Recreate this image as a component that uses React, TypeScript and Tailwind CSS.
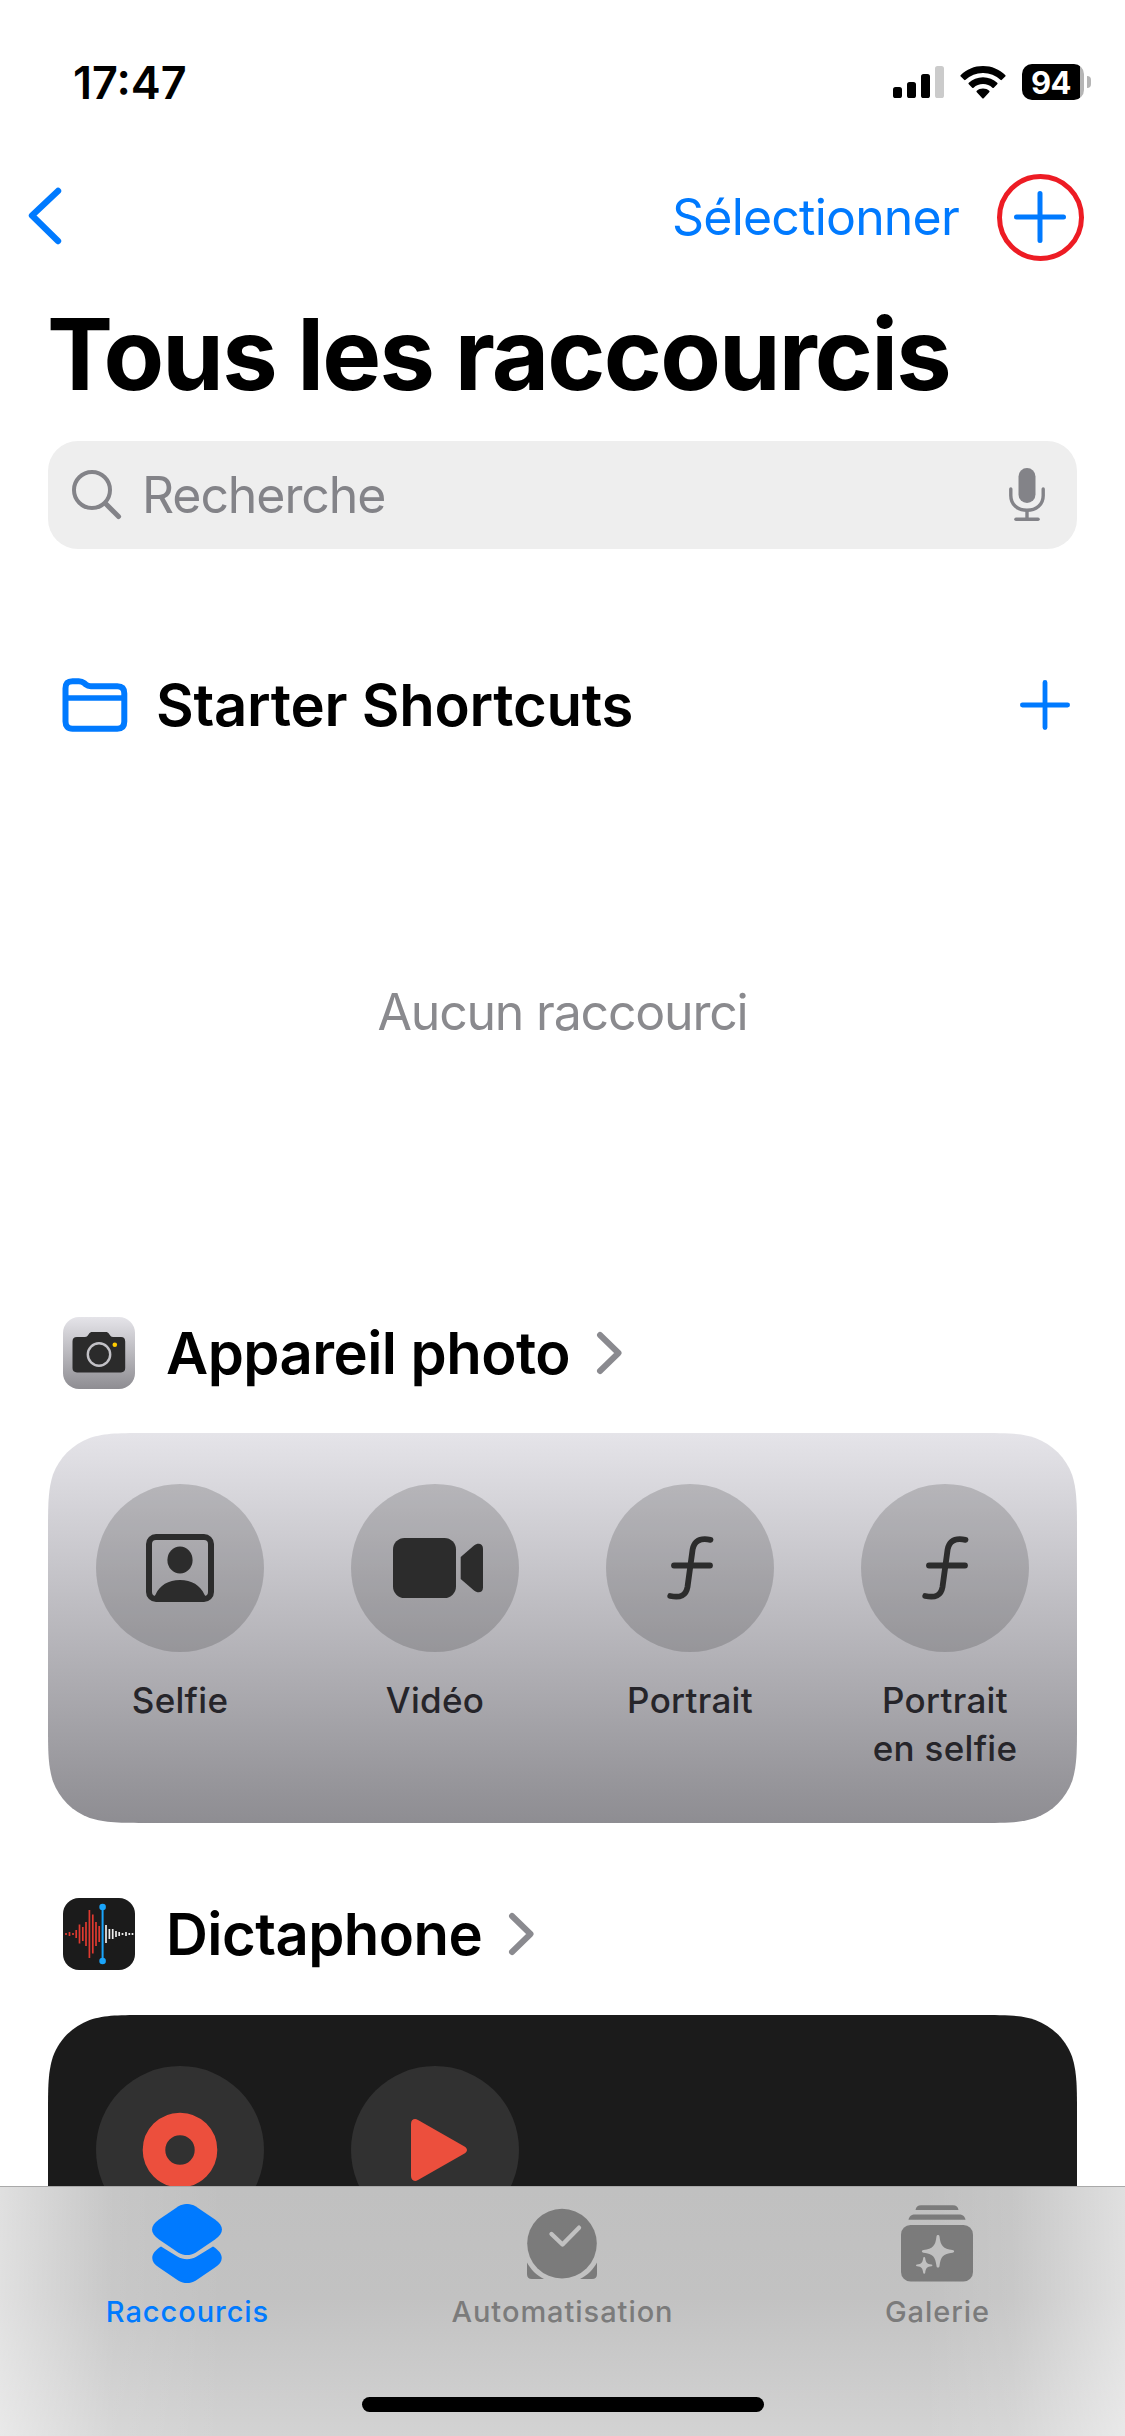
import React from 'react';

interface Shortcut {
  label: string;
  icon: React.ReactNode;
}

interface SectionTitleProps {
  icon: React.ReactNode;
  title: string;
}

interface TabProps {
  icon: React.ReactNode;
  label: string;
  active?: boolean;
}

const SignalIcon = () => (
  <svg className="h-8 w-[51px]" viewBox="0 0 51 32">
    <rect x="0" y="21" width="9" height="11" rx="2.6" />
    <rect x="14" y="16" width="9" height="16" rx="2.6" />
    <rect x="28" y="8" width="9" height="24" rx="2.6" />
    <rect x="42" y="0" width="9" height="32" rx="2.6" fill="#cbcbcb" />
  </svg>
);

const WifiIcon = () => (
  <svg className="h-[33px] w-[46px]" viewBox="0 0 46 33">
    <path d="M23 0C31.700 0 39.500 3.400 45.200 9a1 1 0 0 1 0 1.500l-3.300 3.300a1 1 0 0 1-1.500 0A25 25 0 0 0 23 6.900 25 25 0 0 0 5.600 13.800a1 1 0 0 1-1.500 0L.8 10.500a1 1 0 0 1 0-1.500C6.500 3.400 14.300 0 23 0Z" />
    <path d="M23 11.200c5.500 0 10.500 2.100 14.200 5.600a1 1 0 0 1 0 1.500l-3.400 3.400a1 1 0 0 1-1.400 0A13.800 13.800 0 0 0 23 18.100c-3.600 0-6.900 1.400-9.400 3.600a1 1 0 0 1-1.400 0l-3.400-3.400a1 1 0 0 1 0-1.500c3.700-3.500 8.700-5.600 14.200-5.600Z" />
    <path d="M23 22.500c2.400 0 4.600.9 6.200 2.300a1 1 0 0 1 0 1.500l-5.500 5.900a1 1 0 0 1-1.400 0l-5.500-5.900a1 1 0 0 1 0-1.500c1.600-1.400 3.800-2.300 6.200-2.300Z" />
  </svg>
);

const FolderIcon = () => (
  <svg className="h-[54px] w-[66px]" viewBox="0 0 66 54" fill="none" stroke="#007aff" strokeWidth="6" strokeLinejoin="round">
    <path d="M3.500 10.500c0-5 2.200-7.300 7-7.300h6.300c2.300 0 3.700.5 5.300 1.900l1.700 1.500c1.500 1.300 2.800 1.700 5 1.700h26.500c4.600 0 7 2.500 7 7.200v28c0 4.700-2.400 7.200-7 7.200h-44.800c-4.600 0-7-2.500-7-7.200Z" />
    <path d="M4 20h58" strokeWidth="5.400" />
  </svg>
);

const PlusIcon = ({ className }: { className: string }) => (
  <svg className={className} viewBox="0 0 52 52" fill="none" stroke="#007aff" strokeWidth="5" strokeLinecap="round">
    <path d="M26 2.500v47M2.500 26h47" />
  </svg>
);

const SearchIcon = () => (
  <svg className="h-[50px] w-[50px]" viewBox="0 0 50 50" fill="none" stroke="#838388" strokeLinecap="round">
    <circle cx="20" cy="20" r="18" strokeWidth="4" />
    <path d="M33.500 33.500l13 13" strokeWidth="5" />
  </svg>
);

const MicIcon = () => (
  <svg className="h-[54px] w-[36px]" viewBox="0 0 36 54" fill="none" stroke="#838388" strokeLinecap="round">
    <rect x="9.500" y="0" width="17" height="35" rx="8.500" fill="#838388" stroke="none" />
    <path d="M1.800 21v6.500C1.800 36.500 8.500 42.300 18 42.300s16.200-5.800 16.200-14.800V21" strokeWidth="3.400" />
    <path d="M18 43v7" strokeWidth="3.400" />
    <path d="M7 51.200h22" strokeWidth="3.600" />
  </svg>
);

const ChevronRight = () => (
  <svg className="h-[44px] w-[27px]" viewBox="0 0 27 44" fill="none" stroke="#8a8a8f" strokeWidth="6" strokeLinecap="round" strokeLinejoin="round">
    <path d="M4 4l18.500 18L4 40" />
  </svg>
);

const CameraAppIcon = () => (
  <svg className="h-[72px] w-[72px]" viewBox="0 0 72 72">
    <defs>
      <linearGradient id="cam" x1="0" y1="0" x2="0" y2="1">
        <stop offset="0" stopColor="#e5e4e9" />
        <stop offset="1" stopColor="#8e8d92" />
      </linearGradient>
    </defs>
    <rect width="72" height="72" rx="16" fill="url(#cam)" />
    <path d="M14 20h8c1.600 0 2.400-.6 3.200-1.900l.8-1.300c.9-1.400 1.700-1.900 3.400-1.900h13.200c1.700 0 2.500.5 3.400 1.900l.8 1.300c.8 1.300 1.600 1.900 3.200 1.900h8c2.700 0 4.200 1.500 4.200 4.400v26.700c0 2.900-1.500 4.300-4.200 4.300H14c-2.900 0-4.500-1.400-4.500-4.300V24.400c0-2.900 1.600-4.400 4.500-4.400Z" fill="#2b2b2b" />
    <circle cx="36" cy="37.500" r="11.200" fill="none" stroke="#c2c1c6" strokeWidth="2.400" />
    <circle cx="51.800" cy="27.700" r="2.300" fill="#ffcc00" />
  </svg>
);

// x position and half height of every bar in the wave
const redBars = [
  [3, 1], [6.500, 2], [10, 1], [13.200, 4], [16.500, 9.500], [19.800, 7], [23, 12],
  [26.400, 24], [29.800, 19.500], [33, 12], [36.200, 8],
];
const whiteBars = [
  [43, 9], [46.400, 5], [49.700, 5], [53, 3], [56.200, 2], [59.500, 1], [63, 2], [66.300, 1], [69.500, 1],
];

const DictaphoneAppIcon = () => (
  <svg className="h-[72px] w-[72px]" viewBox="0 0 72 72">
    <rect width="72" height="72" rx="16" fill="#1b1b1b" />
    {redBars.map(([x, h]) => (
      <path key={x} d={`M${x} ${36 - h}v${h * 2}`} stroke="#e03a30" strokeWidth="1.700" />
    ))}
    {whiteBars.map(([x, h]) => (
      <path key={x} d={`M${x} ${36 - h}v${h * 2}`} stroke="#ececec" strokeWidth="1.700" />
    ))}
    <path d="M39.600 9v54" stroke="#1aa5fb" strokeWidth="2" />
    <circle cx="39.600" cy="9" r="3.300" fill="#1aa5fb" />
    <circle cx="39.600" cy="63" r="3.300" fill="#1aa5fb" />
  </svg>
);

const SelfieIcon = () => (
  <svg className="h-[68px] w-[68px]" viewBox="0 0 68 68" fill="#2c2c2c">
    <rect x="3" y="3" width="62" height="62" rx="7" fill="none" stroke="#2c2c2c" strokeWidth="6" />
    <ellipse cx="34" cy="26" rx="12.600" ry="13.600" />
    <path d="M5 65c2-1.200 3.500-2.200 4.600-4.600C13.500 51.500 22.500 46 34 46s20.500 5.500 24.400 14.400C59.500 62.800 61 63.800 63 65Z" />
  </svg>
);

const VideoIcon = () => (
  <svg className="ml-1.5 h-[60px] w-[90px]" viewBox="0 0 90 60" fill="#2c2c2c">
    <rect x="0" y="0" width="63" height="60" rx="11.500" />
    <path d="M67.700 19 81 7.500c3.500-3 9-2.500 9 3v39c0 5.500-5.500 6-9 3L67.700 41Z" />
  </svg>
);

const FunctionIcon = () => (
  <svg className="h-[64px] w-[47px]" viewBox="0 0 47 64" fill="none" stroke="#2c2c2c" strokeWidth="5.800" strokeLinecap="round">
    <path d="M43.500 3.800C33 1.800 27.300 4.700 25.600 13.500L20.500 51C19 59.500 13.500 62.200 3.200 60" />
    <path d="M7 29.500h36" />
  </svg>
);

const RecordIcon = () => (
  <svg className="h-[76px] w-[76px]" viewBox="0 0 76 76">
    <circle cx="38" cy="38" r="26" fill="none" stroke="#ec4f3d" strokeWidth="22.600" />
  </svg>
);

const PlayIcon = () => (
  <svg className="ml-2 h-[62px] w-[56px]" viewBox="0 0 56 62" fill="#ec4f3d">
    <path d="M0 5C0 .8 3.300-1.200 7 1l46.500 26.500c3.300 2 3.300 5 0 7L7 61C3.300 63.200 0 61.200 0 57Z" />
  </svg>
);

const ShortcutsIcon = () => (
  <svg className="mr-0.5 h-20 w-[70px]" viewBox="0 0 70 80" fill="#007aff">
    <path d="M26.500 2.300c5.500-3.100 11.500-3.100 17 0L63 15.500c9.300 6.300 9.300 13.700 0 20L43.500 48.700c-5.500 3.100-11.500 3.100-17 0L7 35.500c-9.300-6.300-9.300-13.700 0-20Z" />
    <path d="M9 42.500 25.300 52.600c6.300 3.600 13.100 3.600 19.400 0L61 42.500c10.500 6.500 12 14.500 2 21L43.500 76.700c-5.500 3.100-11.500 3.100-17 0L7 63.500c-10-6.500-8.500-14.500 2-21Z" />
  </svg>
);

const AutomationIcon = () => (
  <svg className="mr-0.5 h-20 w-[70px]" viewBox="0 0 70 80" fill="#7b7b7b">
    <circle cx="35" cy="39.600" r="34.800" />
    <path d="M0 58.500C3.500 65 9.500 71.500 17 75H5c-3.400 0-5-1.600-5-5Z" />
    <path d="M70 58.500C66.500 65 60.500 71.500 53 75h12c3.400 0 5-1.600 5-5Z" />
    <path d="M24.500 30 35.500 40.500 52 23.700" fill="none" stroke="#c1c1c1" strokeWidth="4.400" strokeLinecap="round" strokeLinejoin="round" />
  </svg>
);

const GalleryIcon = () => (
  <svg className="mr-0.5 h-20 w-[72px]" viewBox="0 0 72 80" fill="#7b7b7b">
    <path d="M14.500 6c.4-3.300 2.300-4.800 5.500-4.800h32c3.200 0 5.100 1.500 5.500 4.800Z" />
    <path d="M7.500 15.800c.7-3.700 3-5.300 6.500-5.300h44c3.500 0 5.800 1.600 6.500 5.300Z" />
    <rect x="0" y="21" width="72" height="56.500" rx="9.500" />
    <path d="M37 31c.9 0 1.400.5 1.500 1.500 1.100 9.400 3.600 12.400 13 13.400 1 .1 1.600.6 1.600 1.400s-.6 1.300-1.600 1.400c-9.400 1-11.900 4-13 13.400-.1 1-.6 1.500-1.500 1.500s-1.400-.5-1.500-1.500c-1.100-9.400-3.600-12.400-13-13.400-1-.1-1.600-.6-1.600-1.400s.6-1.300 1.600-1.400c9.400-1 11.900-4 13-13.400.1-1 .6-1.500 1.500-1.500Z" fill="#c0c0c0" />
    <path d="M23.200 53c.6 0 .9.300 1 1 .5 4.500 1.800 6 6.200 6.500.6.100 1 .4 1 .9s-.4.800-1 .9c-4.400.5-5.700 2-6.200 6.500-.1.700-.4 1-1 1s-.9-.3-1-1c-.5-4.500-1.800-6-6.200-6.500-.6-.1-1-.4-1-.9s.4-.8 1-.9c4.400-.5 5.700-2 6.200-6.500.1-.7.4-1 1-1Z" fill="#c0c0c0" />
  </svg>
);

const SectionTitle: React.FC<SectionTitleProps> = ({ icon, title }) => (
  <div className="flex h-[72px] items-center pl-[63px]">
    {icon}
    <h2 className="ml-[31px] mr-[26px] text-[58px] font-semibold leading-[72px] tracking-[-0.55px]">{title}</h2>
    <ChevronRight />
  </div>
);

const Tab: React.FC<TabProps> = ({ icon, label, active }) => (
  <div className="flex flex-col items-center pt-[17px]">
    {icon}
    <span
      className={`mt-[11px] text-[29px] font-medium leading-[34px] tracking-[0.95px] ${
        active ? 'text-[#007aff]' : 'text-[#7b7b7b]'
      }`}
    >
      {label}
    </span>
  </div>
);

const cameraShortcuts: Shortcut[] = [
  { label: 'Selfie', icon: <SelfieIcon /> },
  { label: 'Vidéo', icon: <VideoIcon /> },
  { label: 'Portrait', icon: <FunctionIcon /> },
  { label: 'Portrait\nen selfie', icon: <FunctionIcon /> },
];

const App: React.FC = () => {
  return (
    <div className="flex h-[2436px] w-[1125px] flex-col overflow-hidden bg-white font-['Inter','Liberation_Sans',sans-serif] text-black">
      <main className="min-h-0 flex-1 overflow-hidden">
        {/* Status bar */}
        <div className="flex h-[132px] items-center pl-[73px] pr-[34px] pt-8">
          <span className="text-[45px] font-semibold leading-none">17:47</span>
          <div className="ml-auto flex items-center">
            <SignalIcon />
            <span className="ml-4 flex">
              <WifiIcon />
            </span>
            <div className="ml-4 flex h-9 w-[62px] items-center justify-center rounded-[10px] bg-linear-to-r from-black from-94% to-[#b5b5b5] to-94% pr-1 text-[31px] font-bold leading-none tracking-[-0.5px] text-white">
              94
            </div>
            <div className="ml-[3px] h-3 w-1 rounded-r-full bg-[#b5b5b5]" />
          </div>
        </div>

        {/* Navigation */}
        <div className="flex h-[171px] items-center pl-[27px] pr-[41px]">
          <svg className="mb-1 h-[58px] w-[35px]" viewBox="0 0 35 58" fill="none" stroke="#007aff" strokeWidth="6.400" strokeLinecap="round" strokeLinejoin="round">
            <path d="M31 4 5 28.500 31 54" />
          </svg>
          <span className="mb-0.5 ml-auto mr-[38px] text-[50px] leading-none tracking-[-0.8px] text-[#007aff]">Sélectionner</span>
          <div className="flex h-[87px] w-[87px] items-center justify-center rounded-full border-[5px] border-[#ed1c24]">
            <PlusIcon className="mb-0.5 mr-0.5 h-[52px] w-[52px]" />
          </div>
        </div>

        <h1 className="pl-[47px] text-[99px] font-bold leading-[102px] tracking-[-1.85px]">Tous les raccourcis</h1>

        {/* Search */}
        <div className="mx-12 mt-9 flex h-[108px] items-center rounded-[30px] bg-[#eeeeee] pl-6 pr-8">
          <SearchIcon />
          <span className="ml-[20px] flex-1 text-[50px] leading-none tracking-[-1.1px] text-[#838388]">Recherche</span>
          <MicIcon />
        </div>

        <div className="mt-[114px] flex h-[84px] items-center pl-[62px] pr-[55px]">
          <FolderIcon />
          <h2 className="ml-[28px] flex-1 text-[58px] font-semibold leading-[84px] tracking-[-0.25px]">Starter Shortcuts</h2>
          <PlusIcon className="h-[50px] w-[50px]" />
        </div>

        <div className="flex h-[530px] items-center justify-center text-[50px] leading-none tracking-[-1.2px] text-[#8a8a8e]">
          Aucun raccourci
        </div>

        <section className="mt-10">
          <SectionTitle icon={<CameraAppIcon />} title="Appareil photo" />
          <div className="mx-12 mt-11 grid h-[390px] grid-cols-4 gap-[87px] bg-linear-to-b from-[#e5e4e9] to-[#8e8d92] px-12 pt-[51px] [clip-path:path('M100.9,0_H928.1_C957.2,0_971.7,0_987.3,4.9_C1004.4,11.2_1017.8,24.6_1024.1,41.7_C1029,57.3_1029,71.8_1029,100.9_V289.1_C1029,318.2_1029,332.7_1024.1,348.3_C1017.8,365.4_1004.4,378.8_987.3,385.1_C971.7,390_957.2,390_928.1,390_H100.9_C71.8,390_57.3,390_41.7,385.1_C24.6,378.8_11.2,365.4_4.9,348.3_C0,332.7_0,318.2_0,289.1_V100.9_C0,71.8_0,57.3_4.9,41.7_C11.2,24.6_24.6,11.2_41.7,4.9_C57.3,0_71.8,0_100.9,0_Z')]">
            {cameraShortcuts.map((item) => (
              <div key={item.label} className="flex flex-col items-center">
                <div className="flex h-[168px] w-[168px] items-center justify-center rounded-full bg-black/16">
                  {item.icon}
                </div>
                <span className="mt-6 whitespace-pre text-center text-[35px] font-[450] leading-[48px] tracking-[0.3px] text-[#26252a]">
                  {item.label}
                </span>
              </div>
            ))}
          </div>
        </section>

        <section className="mt-[75px]">
          <SectionTitle icon={<DictaphoneAppIcon />} title="Dictaphone" />
          <div className="mx-12 mt-[45px] flex h-[390px] gap-[87px] bg-[#1b1b1b] px-12 pt-[51px] [clip-path:path('M100.9,0_H928.1_C957.2,0_971.7,0_987.3,4.9_C1004.4,11.2_1017.8,24.6_1024.1,41.7_C1029,57.3_1029,71.8_1029,100.9_V390_H0_V100.9_C0,71.8_0,57.3_4.9,41.7_C11.2,24.6_24.6,11.2_41.7,4.9_C57.3,0_71.8,0_100.9,0_Z')]">
            <div className="flex h-[168px] w-[168px] items-center justify-center rounded-full bg-[#313131]">
              <RecordIcon />
            </div>
            <div className="flex h-[168px] w-[168px] items-center justify-center rounded-full bg-[#313131]">
              <PlayIcon />
            </div>
          </div>
        </section>
      </main>

      {/* Tab bar */}
      <nav className="h-[250px] shrink-0 border-t border-[#a9a9a9] bg-[linear-gradient(to_right,rgba(255,255,255,0.5),rgba(255,255,255,0.3)_5%,rgba(255,255,255,0.1)_10%,transparent_20%,transparent_82%,rgba(255,255,255,0.1)_90%,rgba(255,255,255,0.3)_95%,rgba(255,255,255,0.5)),linear-gradient(to_bottom,#c0c0c0,#c2c2c2_45%,#d3d3d3)]">
        <div className="grid grid-cols-3">
          <Tab icon={<ShortcutsIcon />} label="Raccourcis" active />
          <Tab icon={<AutomationIcon />} label="Automatisation" />
          <Tab icon={<GalleryIcon />} label="Galerie" />
        </div>
        <div className="mx-auto mt-[68px] h-[15px] w-[402px] rounded-full bg-black" />
      </nav>
    </div>
  );
};

export default App;
